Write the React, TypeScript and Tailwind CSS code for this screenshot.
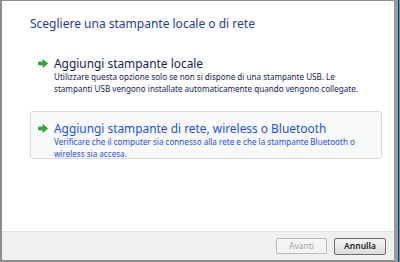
import React from 'react';

function GreenArrow() {
  return (
    <svg width="10" height="9" viewBox="0 0 10 9" className="shrink-0" aria-hidden="true">
      <path d="M0.5 3.2 H5 V0.8 L9.5 4.5 L5 8.2 V5.8 H0.5 Z" fill="#2bb52b" stroke="#1a7d1a" strokeWidth="0.8" strokeLinejoin="round" />
    </svg>
  );
}

interface OptionProps {
  title: string;
  desc: string;
  hover?: boolean;
}

function CommandLink({ title, desc, hover }: OptionProps) {
  return (
    <div
      className={`flex gap-[6px] pl-[7px] pr-[14px] pt-[8px] pb-[6px] h-[48px] rounded-[3px] border ${
        hover ? 'border-[#d6d9de] bg-[#f9fafb]' : 'border-transparent'
      }`}
    >
      <div className="pt-[4px]">
        <GreenArrow />
      </div>
      <div className="flex flex-col">
        <div className={`text-[11.9px] leading-[16px] ${hover ? 'text-[#1d4ee6]' : 'text-[#151c55]'}`}>{title}</div>
        <div className={`text-[8.1px] leading-[12px] ${hover ? 'text-[#1d4ee6]' : 'text-[#151c55]'}`}>{desc}</div>
      </div>
    </div>
  );
}

export default function App() {
  return (
    <div className="w-[400px] h-[262px] flex bg-[#8c8c8c] overflow-hidden" style={{ fontFamily: '"Noto Sans", "Open Sans", sans-serif' }}>
      <div className="ml-[2px] mt-[1px] mb-[2px] w-[392px] flex flex-col bg-white">
        <div className="flex-1 flex flex-col pl-[28px] pr-[12px]">
          <div className="mt-[15px] text-[12px] leading-[16px] text-[#1e3c9b]">Scegliere una stampante locale o di rete</div>
          <div className="mt-[14px] flex flex-col gap-[17px]">
            <CommandLink
              title="Aggiungi stampante locale"
              desc="Utilizzare questa opzione solo se non si dispone di una stampante USB. Le stampanti USB vengono installate automaticamente quando vengono collegate."
            />
            <CommandLink
              hover
              title="Aggiungi stampante di rete, wireless o Bluetooth"
              desc="Verificare che il computer sia connesso alla rete e che la stampante Bluetooth o wireless sia accesa."
            />
          </div>
        </div>
        <div className="h-[29px] flex items-center justify-end gap-[7px] pr-[8px] bg-[#f0f0f0] border-t border-[#dfdfdf]">
          <button className="w-[51px] h-[16px] rounded-[2px] border border-[#b5b9bc] bg-[#f4f4f4] text-[8.5px] text-[#a3a3a3] leading-none">
            Avanti
          </button>
          <button className="w-[52px] h-[17px] rounded-[2px] border border-[#6b6b6b] bg-gradient-to-b from-[#f4f4f4] to-[#dcdcdc] text-[8.5px] font-semibold text-[#222] leading-none">
            Annulla
          </button>
        </div>
      </div>
      <div className="w-[4px] bg-[#9a9a9a] mt-[0px]" />
      <div className="w-[1px] bg-[#3a3a3a]" />
      <div className="w-[1px] bg-[#2aa8d8]" />
    </div>
  );
}
